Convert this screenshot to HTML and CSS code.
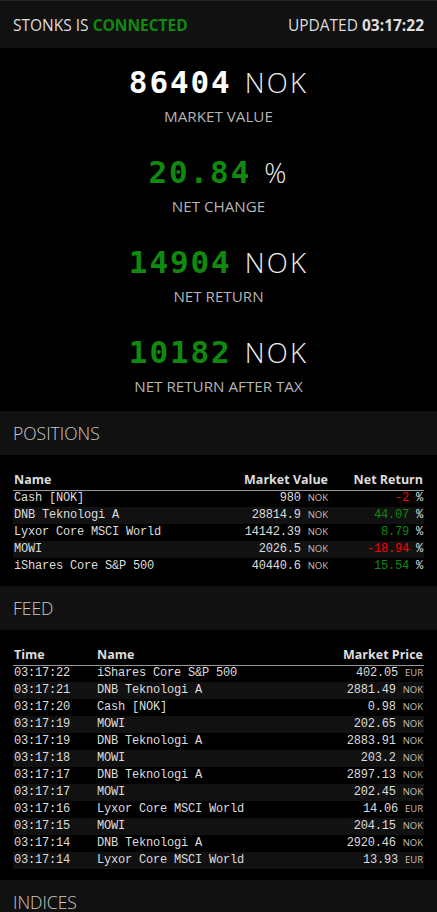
FILE: index.html
```html
<!DOCTYPE html>
<html lang="en">
<head>
<meta charset="utf-8">
<title>Stonks</title>
<link rel="stylesheet" href="styles.css">
</head>
<body>
<header class="topbar">
  <div class="status">STONKS IS <b class="ok">CONNECTED</b></div>
  <div class="updated">UPDATED <b>03:17:22</b></div>
</header>

<section class="stats">
  <div class="stat">
    <div class="value"><span class="num white">86404</span><span class="unit">NOK</span></div>
    <div class="label">MARKET VALUE</div>
  </div>
  <div class="stat">
    <div class="value"><span class="num green">20.84</span><span class="unit">%</span></div>
    <div class="label">NET CHANGE</div>
  </div>
  <div class="stat">
    <div class="value"><span class="num green">14904</span><span class="unit">NOK</span></div>
    <div class="label">NET RETURN</div>
  </div>
  <div class="stat">
    <div class="value"><span class="num green">10182</span><span class="unit">NOK</span></div>
    <div class="label">NET RETURN AFTER TAX</div>
  </div>
</section>

<h2 class="section-title">POSITIONS</h2>
<div class="table-wrap">
  <table class="grid">
    <colgroup><col><col class="c-mv"><col class="c-nr"></colgroup>
    <thead>
      <tr><th class="l">Name</th><th class="r">Market Value</th><th class="r">Net Return</th></tr>
    </thead>
    <tbody>
      <tr><td>Cash [NOK]</td><td class="r">980<span class="cur">NOK</span></td><td class="r"><span class="neg">-2</span> %</td></tr>
      <tr><td>DNB Teknologi A</td><td class="r">28814.9<span class="cur">NOK</span></td><td class="r"><span class="pos">44.07</span> %</td></tr>
      <tr><td>Lyxor Core MSCI World</td><td class="r">14142.39<span class="cur">NOK</span></td><td class="r"><span class="pos">8.79</span> %</td></tr>
      <tr><td>MOWI</td><td class="r">2026.5<span class="cur">NOK</span></td><td class="r"><span class="neg">-18.94</span> %</td></tr>
      <tr><td>iShares Core S&amp;P 500</td><td class="r">40440.6<span class="cur">NOK</span></td><td class="r"><span class="pos">15.54</span> %</td></tr>
    </tbody>
  </table>
</div>

<h2 class="section-title">FEED</h2>
<div class="table-wrap">
  <table class="grid">
    <colgroup><col class="c-time"><col><col class="c-mp"></colgroup>
    <thead>
      <tr><th class="l">Time</th><th class="l">Name</th><th class="r">Market Price</th></tr>
    </thead>
    <tbody>
      <tr><td>03:17:22</td><td>iShares Core S&amp;P 500</td><td class="r">402.05<span class="cur">EUR</span></td></tr>
      <tr><td>03:17:21</td><td>DNB Teknologi A</td><td class="r">2881.49<span class="cur">NOK</span></td></tr>
      <tr><td>03:17:20</td><td>Cash [NOK]</td><td class="r">0.98<span class="cur">NOK</span></td></tr>
      <tr><td>03:17:19</td><td>MOWI</td><td class="r">202.65<span class="cur">NOK</span></td></tr>
      <tr><td>03:17:19</td><td>DNB Teknologi A</td><td class="r">2883.91<span class="cur">NOK</span></td></tr>
      <tr><td>03:17:18</td><td>MOWI</td><td class="r">203.2<span class="cur">NOK</span></td></tr>
      <tr><td>03:17:17</td><td>DNB Teknologi A</td><td class="r">2897.13<span class="cur">NOK</span></td></tr>
      <tr><td>03:17:17</td><td>MOWI</td><td class="r">202.45<span class="cur">NOK</span></td></tr>
      <tr><td>03:17:16</td><td>Lyxor Core MSCI World</td><td class="r">14.06<span class="cur">EUR</span></td></tr>
      <tr><td>03:17:15</td><td>MOWI</td><td class="r">204.15<span class="cur">NOK</span></td></tr>
      <tr><td>03:17:14</td><td>DNB Teknologi A</td><td class="r">2920.46<span class="cur">NOK</span></td></tr>
      <tr><td>03:17:14</td><td>Lyxor Core MSCI World</td><td class="r">13.93<span class="cur">EUR</span></td></tr>
    </tbody>
  </table>
</div>

<h2 class="section-title">INDICES</h2>
</body>
</html>
```

FILE: styles.css
```css
* { box-sizing: border-box; }

html, body {
  margin: 0;
  padding: 0;
  background: #000;
  color: #ddd;
  font-family: "Open Sans", "Noto Sans", sans-serif;
}

.topbar {
  height: 48px;
  background: #111;
  border-top: 1px solid #222;
  display: flex;
  align-items: center;
  justify-content: space-between;
  padding: 0 13px;
  font-size: 15.5px;
  color: #ddd;
}

.topbar b { font-weight: 700; }
.ok { color: #0f8a0f; }

.stats {
  padding: 10px 0 15px;
  display: flex;
  flex-direction: column;
  gap: 22px;
}

.stat {
  display: flex;
  flex-direction: column;
  align-items: center;
}

.value {
  height: 48px;
  display: flex;
  align-items: center;
  justify-content: center;
  gap: 13px;
}

.num {
  font-family: "DejaVu Sans Mono", "Liberation Mono", monospace;
  font-weight: 700;
  font-size: 31px;
  letter-spacing: 1.9px;
}

.white { color: #fff; }
.green { color: #0f8a0f; }

.unit {
  font-weight: 300;
  font-size: 27.5px;
  letter-spacing: 2.2px;
  color: #eee;
}

.label {
  height: 20px;
  line-height: 20px;
  font-size: 15.2px;
  color: #b4b4b4;
}

.section-title {
  margin: 0;
  height: 44px;
  line-height: 44px;
  background: #111;
  padding: 0 13px;
  font-size: 17.5px;
  font-weight: 300;
  color: #ccc;
}

.table-wrap {
  padding: 15px 13px 11px;
}

.grid {
  width: 100%;
  border-collapse: collapse;
  table-layout: fixed;
}

.c-mv { width: 120px; }
.c-nr { width: 95px; }
.c-time { width: 83px; }
.c-mp { width: 140px; }

.grid th {
  height: 20px;
  padding: 0 1px;
  font-size: 12.5px;
  font-weight: 700;
  color: #ddd;
  line-height: 18px;
  border-bottom: 1px solid #999;
  white-space: nowrap;
}

.grid tr { height: 17px; }

.grid td {
  height: 17px;
  padding: 0 1px;
  font-family: "Liberation Mono", "DejaVu Sans Mono", monospace;
  font-size: 12px;
  letter-spacing: -0.2px;
  line-height: 15px;
  color: #ddd;
  white-space: nowrap;
  overflow: hidden;
}

.grid tbody tr:nth-child(even) { background: #111; }

.l { text-align: left; }
.r { text-align: right; }

.cur {
  font-family: "Open Sans", "Noto Sans", sans-serif;
  font-size: 9.5px;
  line-height: 1;
  letter-spacing: 0;
  color: #c8bfae;
  margin-left: 7px;
}

.neg { color: #f00; }
.pos { color: #0f8a0f; }
```
